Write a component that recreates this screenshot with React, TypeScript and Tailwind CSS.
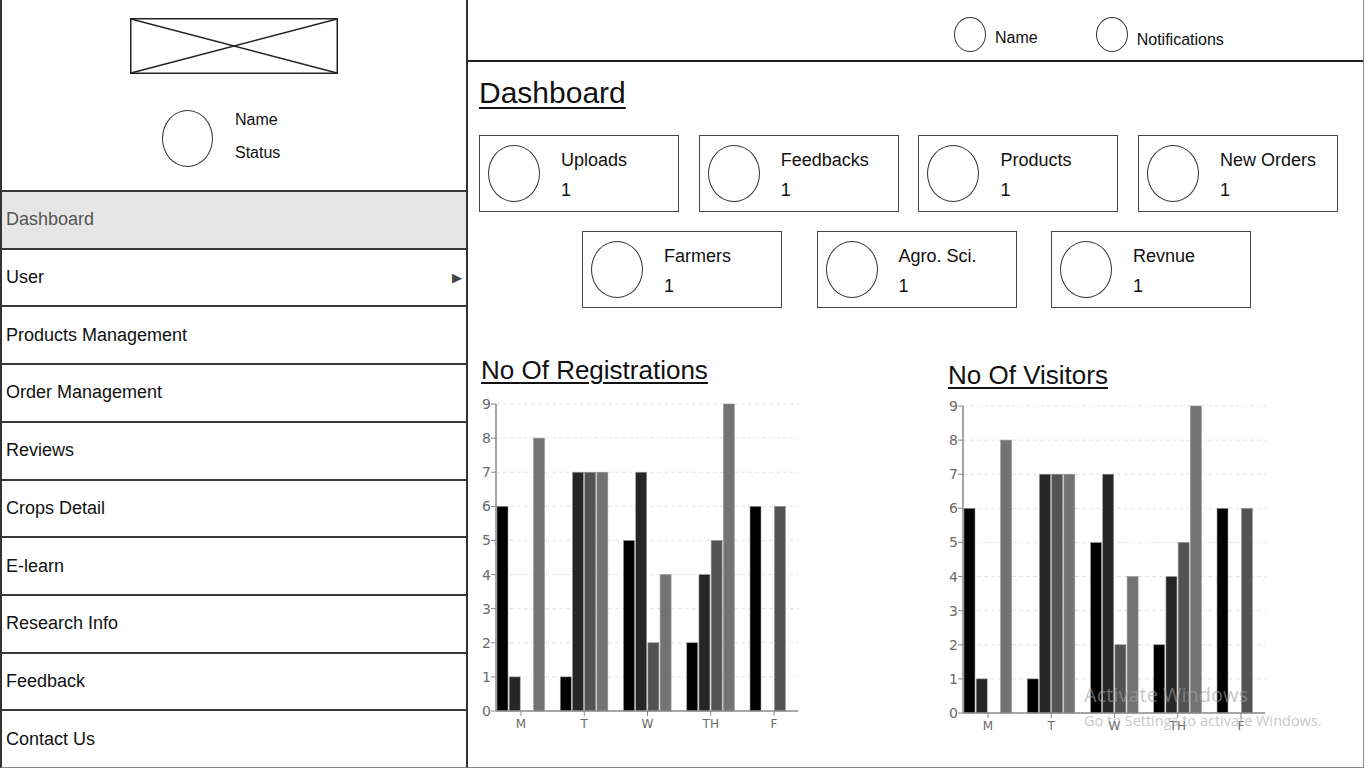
const MENU = [
  'Dashboard', 'User', 'Products Management', 'Order Management', 'Reviews',
  'Crops Detail', 'E-learn', 'Research Info', 'Feedback', 'Contact Us',
]

const CARDS_TOP = ['Uploads', 'Feedbacks', 'Products', 'New Orders']
const CARDS_BOTTOM = ['Farmers', 'Agro. Sci.', 'Revnue']

const SERIES = ['#000000', '#262626', '#535353', '#737373']
const DATA = [
  [6, 1, 0, 8],
  [1, 7, 7, 7],
  [5, 7, 2, 4],
  [2, 4, 5, 9],
  [6, 0, 6, 0],
]
const DAYS = ['M', 'T', 'W', 'TH', 'F']

function Oval({ className }: { className: string }) {
  return <div className={`shrink-0 rounded-[50%] border border-[#333] ${className}`} />
}

function StatCard({ label }: { label: string }) {
  return (
    <div className="flex h-[77px] w-[200px] shrink-0 border border-[#444] pl-[8px] pt-[9px]">
      <Oval className="h-[57px] w-[52px]" />
      <div className="ml-[21px] flex flex-col text-[18px] leading-[30px] text-[#111]">
        <span>{label}</span>
        <span>1</span>
      </div>
    </div>
  )
}

function BarChart() {
  const axisX = 19
  const top = 9
  const zero = 316
  const unit = (zero - top) / 9
  return (
    <svg width="330" height="345" className="block">
      {Array.from({ length: 10 }, (_, i) => {
        const y = zero - i * unit
        return (
          <g key={i}>
            {i > 0 && (
              <line x1={axisX} x2={322} y1={y} y2={y} stroke="#e2e2e2" strokeDasharray="4 3" />
            )}
            <line x1={axisX - 5} x2={axisX} y1={y} y2={y} stroke="#888" />
            <text x={axisX - 5} y={y + 5} textAnchor="end" fontSize="14" fill="#6a6a6a"
              fontFamily="'DejaVu Sans', sans-serif">{i}</text>
          </g>
        )
      })}
      {DATA.map((group, g) => {
        const start = 20 + g * 63.25
        return (
          <g key={g}>
            {group.map((v, s) => v > 0 && (
              <rect key={s} x={start + s * 12.2} y={zero - v * unit} width={11} height={v * unit}
                fill={SERIES[s]} stroke="#9a9a9a" strokeWidth="0.6" />
            ))}
            <line x1={start + 24} x2={start + 24} y1={zero} y2={zero + 5} stroke="#888" />
            <text x={start + 24} y={zero + 17} textAnchor="middle" fontSize="12" fill="#6a6a6a"
              fontFamily="'DejaVu Sans', sans-serif">{DAYS[g]}</text>
          </g>
        )
      })}
      <line x1={axisX} x2={axisX} y1={top} y2={zero} stroke="#888" strokeWidth="1.5" />
      <line x1={axisX} x2={321} y1={zero} y2={zero} stroke="#888" strokeWidth="1.5" />
    </svg>
  )
}

export default function App() {
  return (
    <div className="relative flex h-[768px] w-[1366px] overflow-hidden bg-white font-['Liberation_Sans',Arial,sans-serif] text-[#111]">
      {/* sidebar */}
      <aside className="flex h-full w-[468px] shrink-0 flex-col border-r-2 border-l-2 border-b border-[#333] border-b-[#888]">
        <div className="h-[190px] shrink-0">
          <div className="flex justify-center pt-[18px]">
            <svg width="208" height="56" className="block">
              <rect x="0.75" y="0.75" width="206.5" height="54.5" fill="none" stroke="#222" strokeWidth="1.5" />
              <line x1="1" y1="1" x2="207" y2="55" stroke="#222" strokeWidth="1.3" />
              <line x1="1" y1="55" x2="207" y2="1" stroke="#222" strokeWidth="1.3" />
            </svg>
          </div>
          <div className="mt-[33px] flex items-center pl-[160px]">
            <Oval className="h-[57px] w-[51px]" />
            <div className="ml-[22px] flex flex-col text-[16px] leading-[33px]">
              <span className="-mt-[4px]">Name</span>
              <span>Status</span>
            </div>
          </div>
        </div>
        <nav className="flex flex-1 flex-col">
          {MENU.map((item, i) => (
            <div
              key={item}
              className={`flex flex-1 items-center justify-between border-t-2 border-[#3a3a3a] pl-[4px] pr-[4px] text-[18px] ${
                i === 0 ? 'bg-[#e6e6e6] text-[#555]' : 'text-[#111]'
              }`}
            >
              <span>{item}</span>
              {item === 'User' && <span className="text-[13px] text-[#444]">▶</span>}
            </div>
          ))}
        </nav>
      </aside>

      {/* main */}
      <main className="flex h-full w-[896px] shrink-0 flex-col border-r border-b border-[#888]">
        <header className="flex h-[62px] shrink-0 items-start border-b-2 border-[#222] pl-[486px] pt-[17px]">
          <Oval className="h-[35px] w-[32px]" />
          <span className="ml-[9px] mt-[12px] text-[16px] leading-[18px]">Name</span>
          <Oval className="ml-[58px] h-[35px] w-[32px]" />
          <span className="ml-[9px] mt-[14px] text-[16px] leading-[18px]">Notifications</span>
        </header>

        <div className="flex flex-col pl-[11px]">
          <h1 className="mt-[14px] text-[30px] leading-[34px] underline decoration-2 underline-offset-[4px]">
            Dashboard
          </h1>

          <div className="mt-[25px] flex gap-[19.7px]">
            {CARDS_TOP.map((c) => <StatCard key={c} label={c} />)}
          </div>
          <div className="mt-[19px] flex gap-[34.5px] pl-[103px]">
            {CARDS_BOTTOM.map((c) => <StatCard key={c} label={c} />)}
          </div>

          <div className="mt-[47px] flex">
            <div className="w-[467px] shrink-0">
              <h2 className="ml-[2px] text-[26px] leading-[30px] underline decoration-2 underline-offset-[3px]">
                No Of Registrations
              </h2>
              <div className="mt-[10px] -ml-[2px]">
                <BarChart />
              </div>
            </div>
            <div className="mt-[5px] w-[400px]">
              <h2 className="ml-[2px] text-[26px] leading-[30px] underline decoration-2 underline-offset-[3px]">
                No Of Visitors
              </h2>
              <div className="mt-[7px] -ml-[2px]">
                <BarChart />
              </div>
            </div>
          </div>
        </div>
      </main>

      {/* OS watermark */}
      <div className="pointer-events-none absolute left-[1084px] top-[682px] font-['Open_Sans',sans-serif] text-[#a0a0a0]/60">
        <div className="text-[20px] leading-[26px]">Activate Windows</div>
        <div className="mt-[3px] text-[14.5px] leading-[20px]">Go to Settings to activate Windows.</div>
      </div>
    </div>
  )
}
